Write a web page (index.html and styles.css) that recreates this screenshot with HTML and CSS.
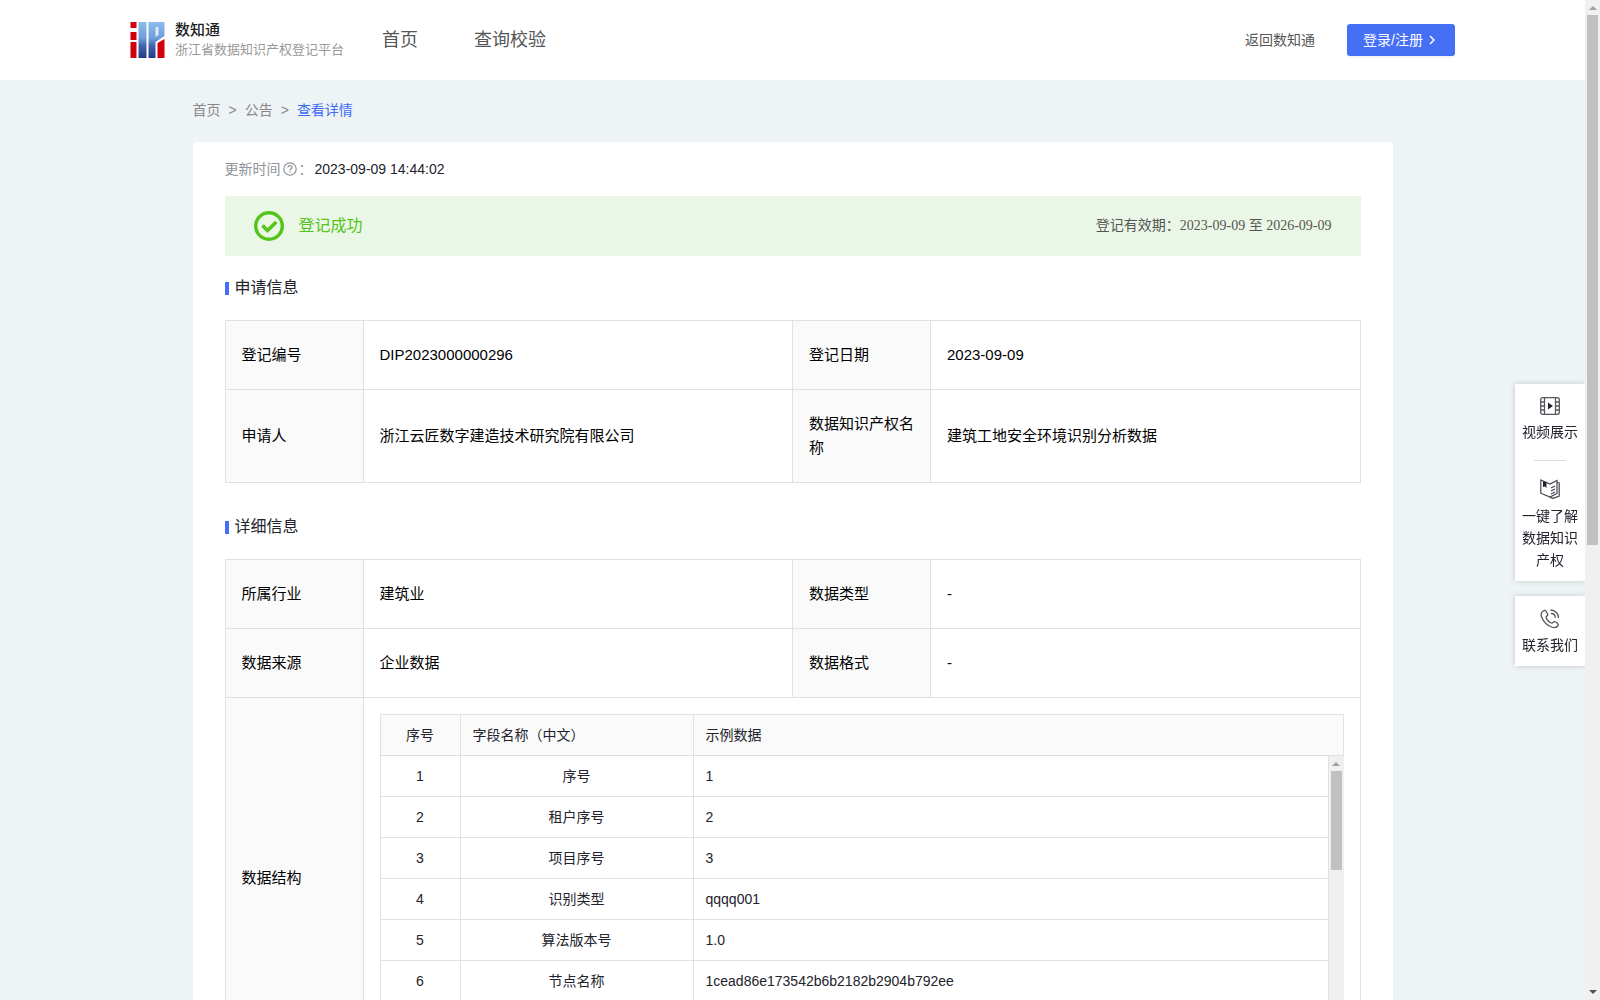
FILE: index.html
```html
<!DOCTYPE html>
<html lang="zh-CN">
<head>
<meta charset="utf-8">
<meta name="viewport" content="width=device-width, initial-scale=1">
<title>浙江省数据知识产权登记平台</title>
<link rel="stylesheet" href="styles.css">
</head>
<body>
<header class="header">
  <a class="brand" href="#">
    <svg class="brand-logo" viewBox="0 0 34 36" aria-hidden="true">
      <defs><linearGradient id="blue" x1="0" y1="0" x2="0" y2="1"><stop offset="0" stop-color="#8dbcec"/><stop offset=".45" stop-color="#6f9edb"/><stop offset=".65" stop-color="#4666ae"/><stop offset="1" stop-color="#233a86"/></linearGradient></defs>
      <path fill="#d0000c" d="M0 0h6v6H0zM0 10h6v8H0zM0 20h6v16H0z"/>
      <path fill="url(#blue)" d="M8 0h8v36H8z"/>
      <path fill="url(#blue)" d="M18 0h16v14l-9 6v16h-7z"/>
      <path fill="#dfeaf8" d="M25 5h3v8l-3 2z"/>
      <path fill="#d0000c" d="M27 21l7-4v19h-7z"/>
    </svg>
    <span class="brand-text"><strong class="brand-name">数知通</strong><span class="brand-sub">浙江省数据知识产权登记平台</span></span>
  </a>
  <nav class="nav"><a href="#">首页</a><a href="#">查询校验</a></nav>
  <div class="account">
    <a class="back" href="#">返回数知通</a>
    <button class="login" type="button">登录/注册<svg width="8" height="10" viewBox="0 0 8 10" aria-hidden="true"><path d="M2 1l4 4-4 4" fill="none" stroke="#fff" stroke-width="1.5"/></svg></button>
  </div>
</header>

<main class="main">
  <nav class="crumbs" aria-label="面包屑"><a href="#">首页</a><span>&gt;</span><a href="#">公告</a><span>&gt;</span><a class="current" href="#">查看详情</a></nav>
  <article class="card">
    <p class="updated"><span class="updated-label">更新时间</span><svg width="14" height="14" viewBox="0 0 14 14" aria-hidden="true"><g fill="none" stroke="#909399"><circle cx="7" cy="7" r="6.2" stroke-width="1.2"/><path d="M5 5.6c0-2.8 4-2.6 4-.2C9 6.900 7 6.900 7 8.400M7 9.400v1.300" stroke-width="1.200"/></g></svg><span class="updated-label">：</span><time>2023-09-09 14:44:02</time></p>
    <div class="banner">
      <svg width="30" height="30" viewBox="0 0 30 30" aria-hidden="true"><circle cx="15" cy="15" r="13.300" fill="none" stroke="#52c41a" stroke-width="3.400"/><path d="M8.500 14.500l5 5 8.800-8.500" fill="none" stroke="#52c41a" stroke-width="3.600"/></svg>
      <span class="banner-state">登记成功</span>
      <span class="banner-term">登记有效期：2023-09-09 至 2026-09-09</span>
    </div>

    <h2 class="section">申请信息</h2>
    <table class="info">
      <colgroup><col class="c-label"><col><col class="c-label"><col></colgroup>
      <tr><th scope="row">登记编号</th><td>DIP2023000000296</td><th scope="row">登记日期</th><td>2023-09-09</td></tr>
      <tr><th scope="row">申请人</th><td>浙江云匠数字建造技术研究院有限公司</td><th scope="row">数据知识产权名称</th><td>建筑工地安全环境识别分析数据</td></tr>
    </table>

    <h2 class="section">详细信息</h2>
    <table class="info">
      <colgroup><col class="c-label"><col><col class="c-label"><col></colgroup>
      <tr><th scope="row">所属行业</th><td>建筑业</td><th scope="row">数据类型</th><td>-</td></tr>
      <tr><th scope="row">数据来源</th><td>企业数据</td><th scope="row">数据格式</th><td>-</td></tr>
      <tr><th scope="row">数据结构</th><td class="holder" colspan="3">
        <div class="fields">
          <table class="grid grid-head">
            <colgroup><col class="c-no"><col class="c-name"><col></colgroup>
            <tr><th class="mid" scope="col">序号</th><th scope="col">字段名称（中文）</th><th scope="col">示例数据</th></tr>
          </table>
          <div class="fields-body">
            <table class="grid">
              <colgroup><col class="c-no"><col class="c-name"><col></colgroup>
              <tr><td>1</td><td>序号</td><td>1</td></tr>
              <tr><td>2</td><td>租户序号</td><td>2</td></tr>
              <tr><td>3</td><td>项目序号</td><td>3</td></tr>
              <tr><td>4</td><td>识别类型</td><td>qqqq001</td></tr>
              <tr><td>5</td><td>算法版本号</td><td>1.0</td></tr>
              <tr><td>6</td><td>节点名称</td><td>1cead86e173542b6b2182b2904b792ee</td></tr>
            </table>
            <div class="bar" aria-hidden="true"><i class="arrow"></i><i class="thumb thumb-short"></i></div>
          </div>
        </div>
      </td></tr>
    </table>
  </article>
</main>

<aside class="side">
  <div class="side-box">
    <a href="#"><svg width="20" height="18" viewBox="0 0 20 18" aria-hidden="true"><g fill="none" stroke="#55565e" stroke-width="1.300"><rect x=".7" y=".7" width="18.600" height="16.600" rx="2"/><path d="M4.500 1v16M15.500 1v16M1 5h3.500M1 9h3.500M1 13h3.500M15.500 5H19M15.500 9H19M15.500 13H19"/></g><path d="M8 5.500v7l5-3.500z" fill="#22232c"/></svg>视频展示</a>
    <hr>
    <a href="#"><svg width="20" height="20" viewBox="0 0 20 20" aria-hidden="true"><g fill="none" stroke="#444550" stroke-width="1.200"><path d="M.8 1l9.200 4 7-3.500v13L10 18 .8 14.200zM17 3.500l2.200.5v13L13 19.400l-3-1M11 9l4-2M11 12l4-2M11 15l4-2"/></g><path d="M3 2l3.500 1.500V9L5 7.500 3 8z" fill="#22232c"/></svg>一键了解数据知识产权</a>
  </div>
  <div class="side-box side-contact">
    <a href="#"><svg width="20" height="20" viewBox="0 0 20 20" aria-hidden="true"><g fill="none" stroke="#55565e" stroke-width="1.300"><path d="M3.500 1.800c1.200-.9 2-.5 2.700.7l1.200 2c.6 1.100.4 1.900-.6 2.600-1 .7-.9 1.500-.2 2.700 1 1.700 2.300 3 3.900 4 1 .6 1.800.5 2.500-.4.800-1 1.600-1.100 2.700-.4l1.500 1c1.300.9 1.300 1.900.4 3-1.400 1.800-3.700 2-6.100 1C7 16.200 3.300 12.300 1.600 8 .6 5.400 1.200 3.300 3.500 1.800z"/><path d="M10.500 1c4.500 0 8 3.500 8 8M11 4.500c2.500 0 4.300 1.800 4.300 4.300"/></g></svg>联系我们</a>
  </div>
</aside>
<div class="bar page-bar" aria-hidden="true"><i class="arrow"></i><i class="thumb"></i><i class="arrow arrow-down"></i></div>
</body>
</html>
```
FILE: styles.css
```css
* { box-sizing: border-box; }

html { height: 100vh; overflow: hidden; }

body {
  margin: 0;
  padding-right: 15px;
  background: #eef3f6;
  color: #22232c;
  font: 14px/24px "Liberation Sans", Arial, "Noto Sans CJK SC", sans-serif;
}

a { color: inherit; text-decoration: none; }
svg { display: block; flex: none; }

/* Header */
.header {
  display: flex;
  align-items: center;
  height: 80px;
  padding: 0 130px;
  background: #fff;
  color: #555;
}
.brand { display: flex; align-items: center; gap: 10px; }
.brand-logo { width: 35px; height: 36px; }
.brand-text { display: flex; flex-direction: column; line-height: 20px; }
.brand-name { color: #222; font-size: 15px; font-weight: 500; }
.brand-sub { color: #999; font-size: 13px; }
.nav { display: flex; gap: 56px; margin-left: 38px; font-size: 18px; }
.account { display: flex; align-items: center; gap: 32px; margin-left: auto; }
.login {
  display: flex;
  align-items: center;
  gap: 5px;
  width: 108px;
  height: 32px;
  padding: 0 16px;
  border: 0;
  border-radius: 3px;
  background: #456ff5;
  box-shadow: 0 2px 2px rgba(0, 0, 0, .05);
  color: #fff;
  font: inherit;
}

/* Page body */
.main { max-width: 1200px; margin: 0 auto; }
.crumbs { display: flex; gap: 8px; padding: 18px 0 20px; color: #888; }
.crumbs .current { color: #3f6bf5; }
.card { padding: 15px 32px 32px; border-radius: 4px; background: #fff; }

.updated { display: flex; align-items: center; gap: 2px; margin: 0; }
.updated-label { color: #909399; }

.banner {
  display: flex;
  align-items: center;
  height: 60px;
  margin-top: 15px;
  padding: 0 29px;
  background: #ebf7e6;
}
.banner-state { margin-left: 15px; color: #52c41a; font-size: 16px; }
.banner-term {
  margin-left: auto;
  color: #555;
  font-family: "Liberation Serif", "Times New Roman", "Noto Sans CJK SC", serif;
}

.section {
  display: flex;
  align-items: center;
  gap: 6px;
  margin: 20px 0;
  font-size: 16px;
  font-weight: 400;
}
.section::before { width: 4px; height: 13px; background: #456ff5; content: ""; }

/* Label / value tables */
.info {
  width: 100%;
  border-collapse: collapse;
  table-layout: fixed;
  color: #000;
  font-size: 15px;
}
.info + .section { margin-top: 32px; }
.info th, .info td {
  padding: 22px 16px;
  border: 1px solid #e1e1e1;
  font-weight: 400;
  text-align: left;
}
.info th { background: #fafafa; }
.c-label { width: 138px; }
.info .holder { padding: 16px; }

/* Field list */
.fields { height: 328px; border-left: 1px solid #e1e1e1; color: #22232c; font-size: 14px; }
.fields-body { display: flex; align-items: flex-start; height: 287px; }
.grid { width: 100%; border-collapse: separate; border-spacing: 0; table-layout: fixed; }
.info .grid th, .info .grid td {
  height: 41px;
  padding: 8px 12px;
  border-width: 0 1px 1px 0;
}
.info .grid-head th { height: 42px; border-top-width: 1px; }
.info .grid .mid, .info .grid td:nth-child(-n+2) { text-align: center; }
.c-no { width: 80px; }
.c-name { width: 233px; }

/* Scroll bars */
.bar {
  display: flex;
  flex: none;
  flex-direction: column;
  align-items: center;
  align-self: stretch;
  width: 15px;
  background: #f0f0f0;
}
.arrow {
  height: 10px;
  margin-bottom: 5px;
  border: 4px solid transparent;
  border-top-width: 6px;
  border-bottom-color: #a0a0a0;
}
.thumb { width: 11px; height: 53%; background: #c1c1c1; }
.thumb-short { height: 99px; }
.page-bar { position: fixed; top: 0; right: 0; bottom: 0; }
.arrow-down { margin: auto 0 0; border-width: 4px 4px 6px; border-color: #505050 transparent transparent; }

/* Floating shortcuts */
.side {
  position: fixed;
  top: 384px;
  right: 15px;
  display: flex;
  flex-direction: column;
  gap: 15px;
  width: 70px;
}
.side-box {
  padding: 13px 6px 10px;
  background: #fff;
  box-shadow: 0 0 6px rgba(0, 0, 0, .18);
  line-height: 22px;
  text-align: center;
}
.side-box svg { margin: 0 auto 6px; }
.side-box a { display: block; }
.side-box hr { width: 32px; margin: 17px auto 18px; border: 0; border-top: 1px solid #ddd; }
.side-contact svg { margin-bottom: 5px; }
```
